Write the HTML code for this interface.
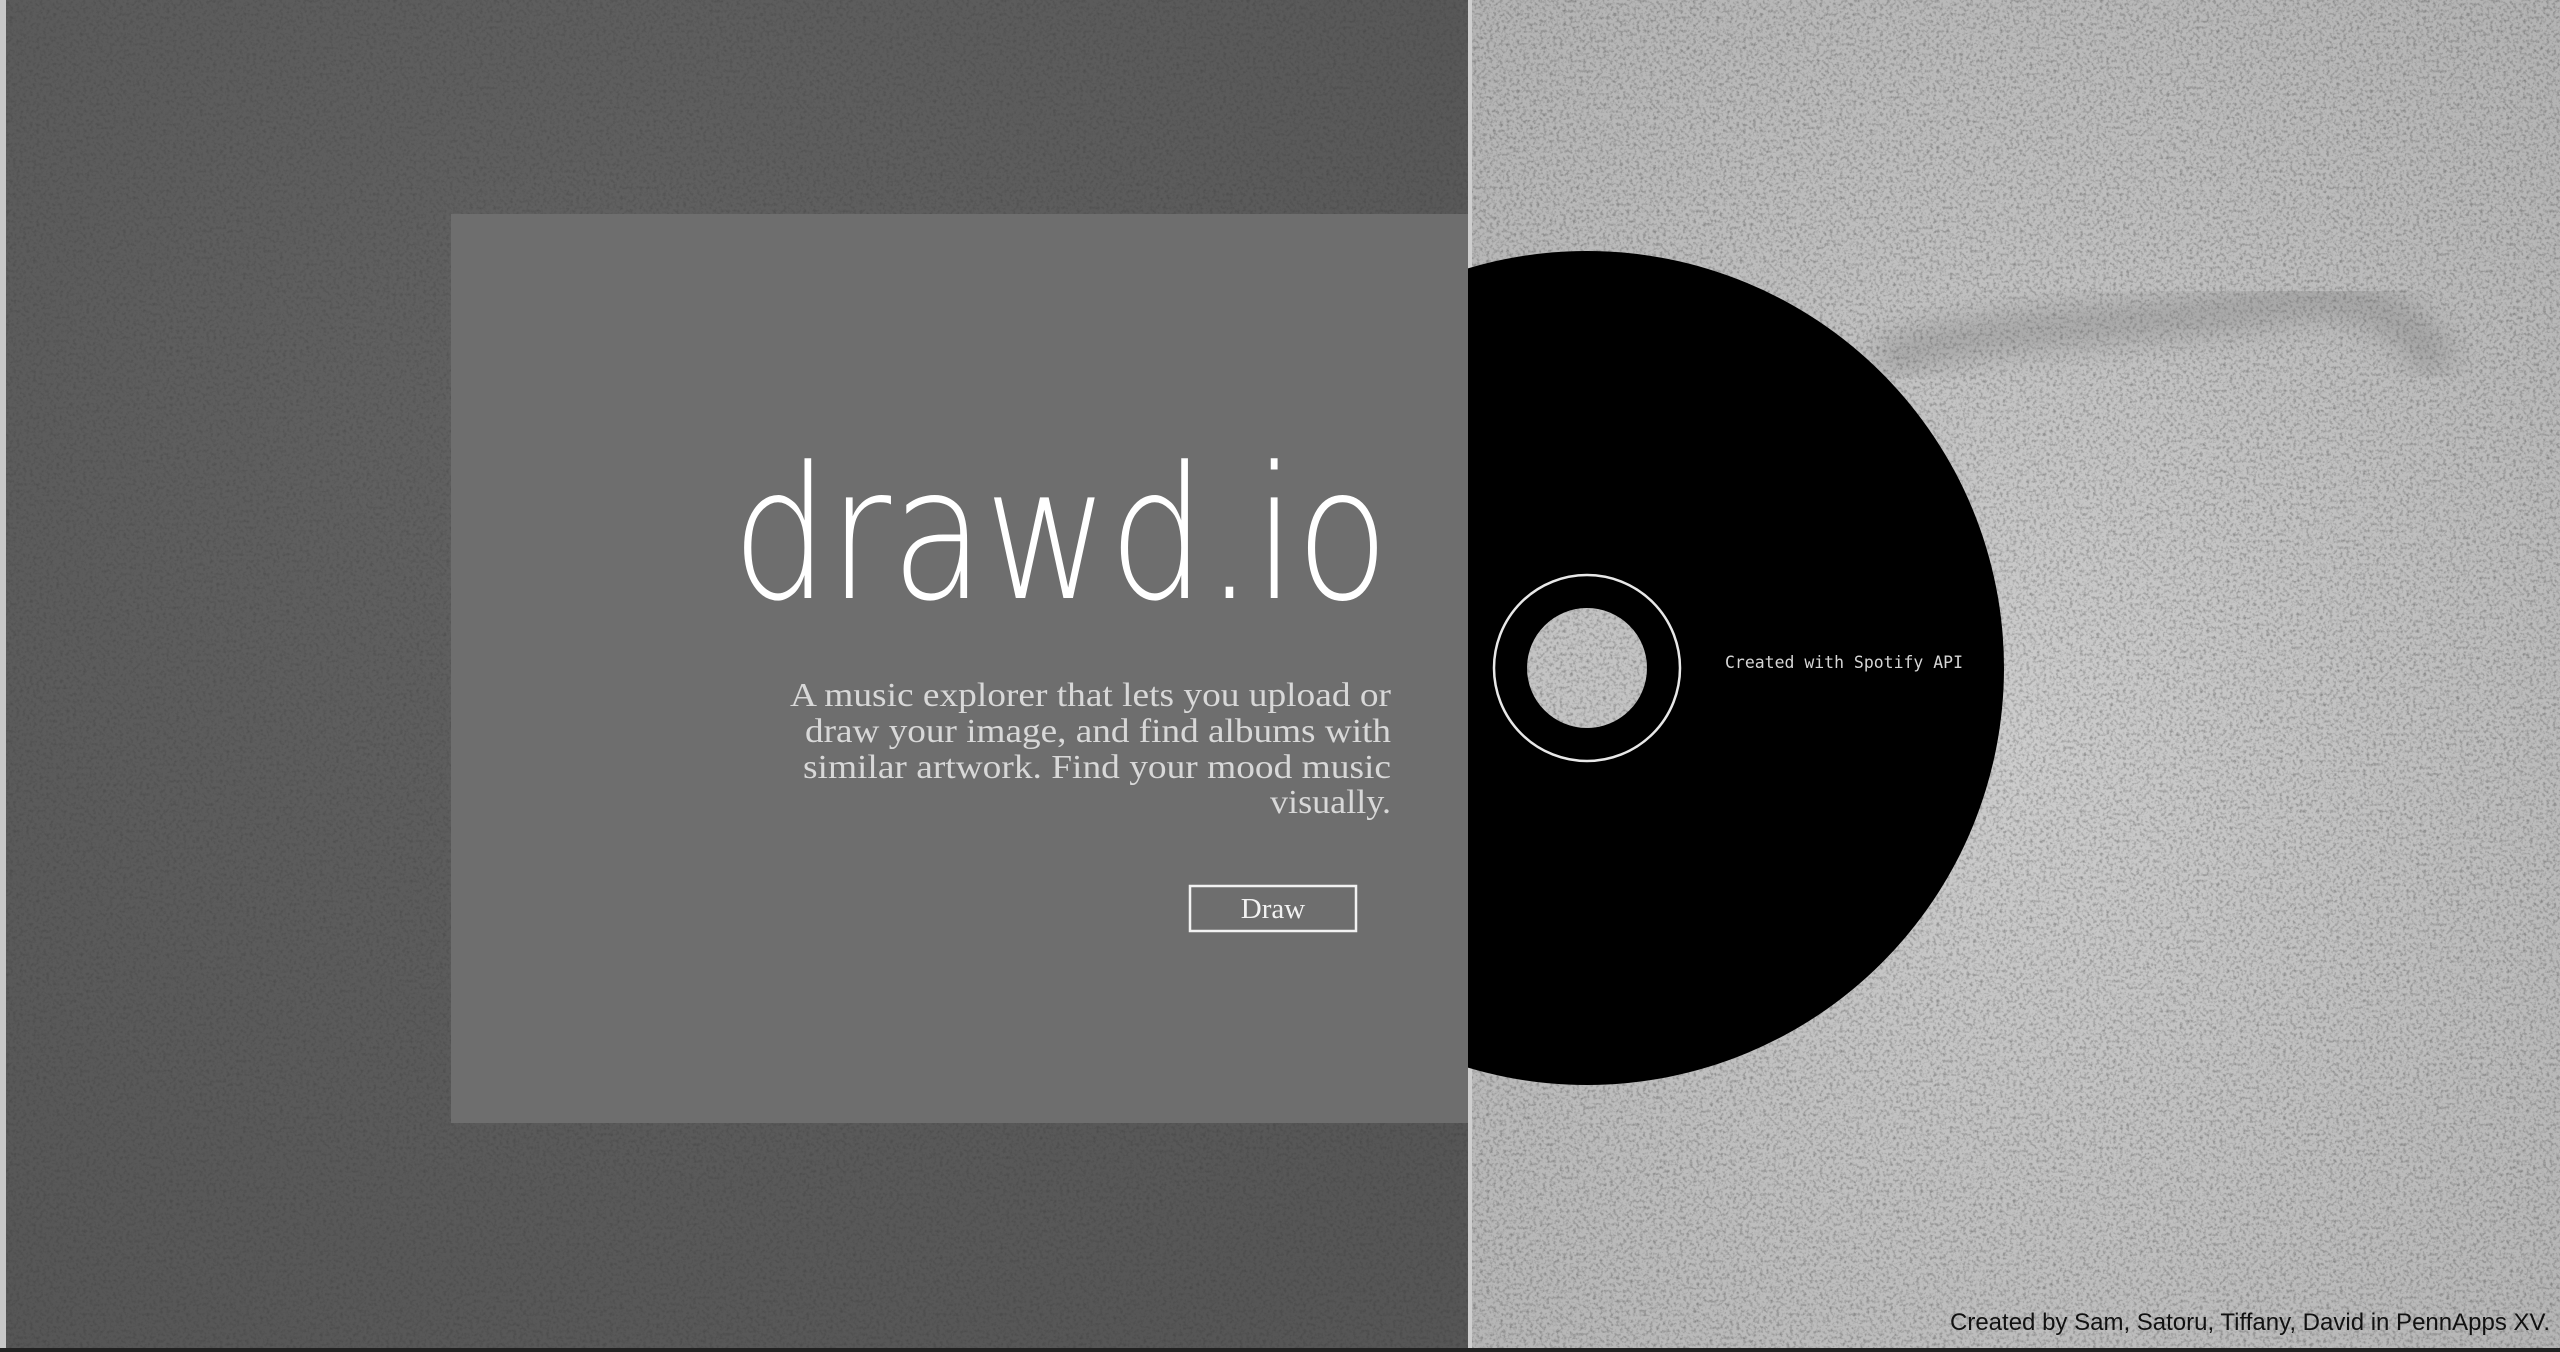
<!DOCTYPE html>
<html><head><meta charset="utf-8"><style>
html,body{margin:0;padding:0;width:2560px;height:1352px;overflow:hidden;background:#b8b8b8}
svg{display:block}
</style></head><body>
<svg width="2560" height="1352" viewBox="0 0 2560 1352" xmlns="http://www.w3.org/2000/svg">
<defs>
<filter id="noise" x="0" y="0" width="100%" height="100%">
<feTurbulence type="fractalNoise" baseFrequency="0.3" numOctaves="3" seed="3"/>
<feColorMatrix type="matrix" values="0 0 0 0 0  0 0 0 0 0  0 0 0 0 0  0 0 0 -2.2 1.2"/>
</filter>
<filter id="blur"><feGaussianBlur stdDeviation="14"/></filter>
<radialGradient id="rg" cx="0.5" cy="0.55" r="0.7">
<stop offset="0" stop-color="#cdcdcd"/><stop offset="1" stop-color="#b4b4b4"/>
</radialGradient>
<radialGradient id="lg" cx="0.4" cy="0.3" r="0.8">
<stop offset="0" stop-color="#626262"/><stop offset="1" stop-color="#565656"/>
</radialGradient>
<clipPath id="right"><rect x="1468" y="0" width="1092" height="1352"/></clipPath>
</defs>
<!-- right concrete -->
<rect x="1468" y="0" width="1092" height="1352" fill="url(#rg)"/>
<rect x="1468" y="0" width="1092" height="1352" filter="url(#noise)" opacity="0.3"/>
<path d="M1880 360 C2000 320 2150 330 2300 300 C2380 290 2420 330 2440 370" stroke="#6a6a6a" stroke-width="40" fill="none" opacity="0.3" filter="url(#blur)"/>
<!-- left panel -->
<rect x="0" y="0" width="1468" height="1352" fill="url(#lg)"/>
<rect x="0" y="0" width="1468" height="1352" filter="url(#noise)" opacity="0.15"/>
<rect x="0" y="0" width="6" height="1352" fill="#c8c8c8"/>
<rect x="451" y="214" width="1017" height="909" fill="#6e6e6e"/>
<!-- CD -->
<g clip-path="url(#right)">
<rect x="1468" y="0" width="4" height="1352" fill="#cfcfcf"/>
<circle cx="1587" cy="668" r="417" fill="#000"/>
</g>
<circle cx="1587" cy="668" r="93" fill="none" stroke="#e8e8e8" stroke-width="2.5"/>
<circle cx="1587" cy="668" r="60" fill="#c4c4c4"/>
<circle cx="1587" cy="668" r="60" filter="url(#noise)" opacity="0.3"/>
<text x="1725" y="668" font-family="'DejaVu Sans Mono','Liberation Mono',monospace" font-size="16.5" fill="#d6d6d6" textLength="238" lengthAdjust="spacingAndGlyphs">Created with Spotify API</text>
<!-- title -->
<text x="732" y="598" font-family="'DejaVu Sans','Liberation Sans',sans-serif" font-weight="200" font-size="184" fill="#fff" textLength="657" lengthAdjust="spacingAndGlyphs">drawd.io</text>
<!-- paragraph -->
<g font-family="'Liberation Serif',serif" font-size="34" fill="#d8d8d8" text-anchor="end">
<text x="1391" y="706" textLength="601" lengthAdjust="spacingAndGlyphs">A music explorer that lets you upload or</text>
<text x="1391" y="742" textLength="586" lengthAdjust="spacingAndGlyphs">draw your image, and find albums with</text>
<text x="1391" y="778" textLength="588" lengthAdjust="spacingAndGlyphs">similar artwork. Find your mood music</text>
<text x="1391" y="813" textLength="121" lengthAdjust="spacingAndGlyphs">visually.</text>
</g>
<!-- button -->
<rect x="1190" y="886" width="166" height="45" fill="none" stroke="#f2f2f2" stroke-width="2.5"/>
<text x="1273" y="918" text-anchor="middle" font-family="'Liberation Serif',serif" font-size="29" fill="#f2f2f2">Draw</text>
<!-- footer -->
<text x="2550" y="1330" text-anchor="end" font-family="'Liberation Sans',sans-serif" font-size="24" fill="#111" textLength="600" lengthAdjust="spacingAndGlyphs">Created by Sam, Satoru, Tiffany, David in PennApps XV.</text>
<rect x="0" y="1348" width="2560" height="4" fill="#222"/>
</svg>
</body></html>
